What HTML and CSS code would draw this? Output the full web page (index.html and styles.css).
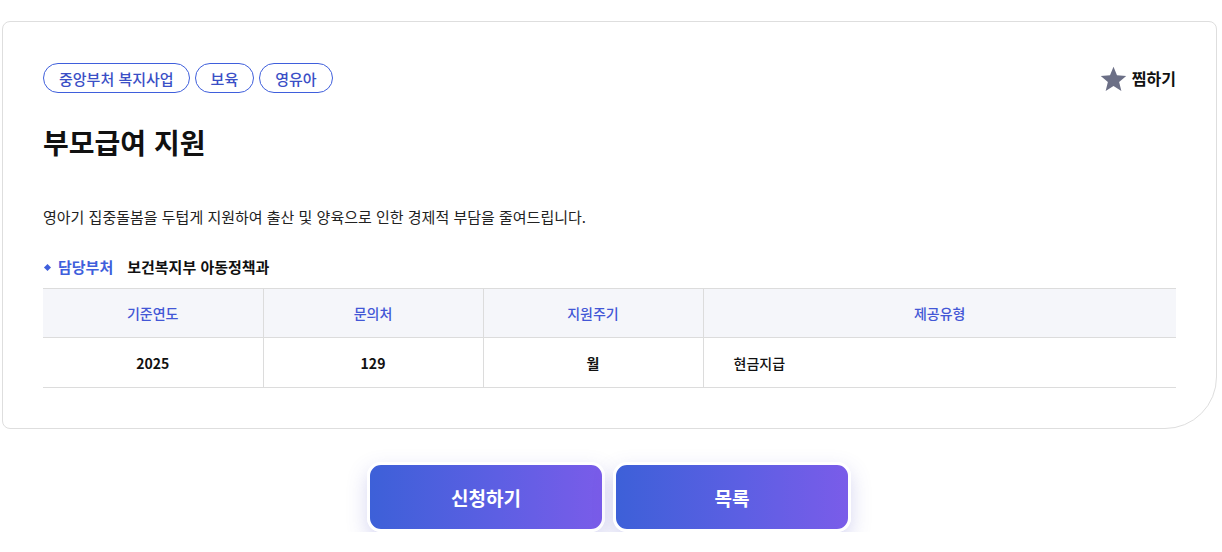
FILE: index.html
```html
<!DOCTYPE html>
<html lang="ko">
<head>
<meta charset="utf-8">
<link rel="stylesheet" href="styles.css">
</head>
<body>
<div class="page">
  <section class="card">
    <div class="top-row">
      <div class="tags">
        <span class="tag">중앙부처 복지사업</span>
        <span class="tag">보육</span>
        <span class="tag">영유아</span>
      </div>
      <button class="fav">
        <svg class="star" viewBox="0 0 24 24" width="27" height="27"><path d="M12 1.5l3.1 7.6 8.2.6-6.3 5.3 2 8-7-4.4-7 4.4 2-8L.7 9.7l8.2-.6z" fill="#6b6f86"/></svg>
        <span>찜하기</span>
      </button>
    </div>
    <h1 class="title">부모급여 지원</h1>
    <p class="desc">영아기 집중돌봄을 두텁게 지원하여 출산 및 양육으로 인한 경제적 부담을 줄여드립니다.</p>
    <div class="dept">
      <span class="dept-label"><span class="diamond"></span>담당부처</span>
      <span class="dept-value">보건복지부 아동정책과</span>
    </div>
    <table class="info">
      <thead>
        <tr><th class="c1">기준연도</th><th class="c2">문의처</th><th class="c3">지원주기</th><th class="c4">제공유형</th></tr>
      </thead>
      <tbody>
        <tr><td>2025</td><td>129</td><td>월</td><td class="left">현금지급</td></tr>
      </tbody>
    </table>
  </section>
  <div class="actions">
    <button class="btn">신청하기</button>
    <button class="btn">목록</button>
  </div>
</div>
</body>
</html>
```

FILE: styles.css
```css
* { box-sizing: border-box; }
html, body { margin: 0; padding: 0; background: #fff; }
body {
  font-family: "Noto Sans CJK KR", "Noto Sans", sans-serif;
  color: #111;
}
.page { padding-top: 21px; padding-left: 2px; width: 1217px; }
.card {
  border: 1px solid #dedede;
  border-radius: 8px 8px 52px 8px;
  padding: 41px 40px 40px 40px;
  background: #fff;
}
.top-row { display: flex; justify-content: space-between; align-items: center; }
.tags { display: flex; gap: 5px; }
.tag {
  display: inline-flex; align-items: center;
  height: 30px; padding: 0 15px;
  border: 1px solid #3f5fdc; border-radius: 15px;
  color: #3a4fc6; font-size: 15px; font-weight: 500;
  line-height: 1;
}
.fav {
  display: flex; align-items: center; gap: 5px;
  background: none; border: 0; padding: 0; margin-right: 0;
  font-family: inherit; font-size: 16px; font-weight: 700; color: #111;
}
.star { display: block; }
.title {
  margin: 30px 0 0; font-size: 28px; font-weight: 700; line-height: 39px;
  color: #111;
}
.desc { margin: 44px 0 0; font-size: 15px; line-height: 22px; color: #222; }
.dept { margin-top: 28px; display: flex; align-items: center; gap: 14px; font-size: 15px; line-height: 22px; font-weight: 700; }
.dept-label { color: #3f5fdc; display: flex; align-items: center; }
.diamond { width: 5px; height: 5px; background: #3f5fdc; transform: rotate(45deg); margin: 0 8px 0 2px; }
.dept-value { color: #111; }
.info {
  margin-top: 10px; width: 100%;
  border-collapse: collapse; table-layout: fixed;
  font-size: 14px;
}
.info th, .info td {
  border-top: 1px solid #dcdcdc; border-bottom: 1px solid #dcdcdc;
  border-left: 1px solid #dcdcdc; text-align: center;
}
.info th:first-child, .info td:first-child { border-left: 0; }
.info th {
  background: #f5f6fa; height: 49px; font-weight: 500; color: #4357d6;
}
.info td { height: 50px; font-weight: 700; color: #111; }
.info td.left { text-align: left; padding-left: 30px; font-weight: 500; }
.c1, .c2, .c3 { width: 220px; }
.actions {
  display: flex; justify-content: center; gap: 8px;
  margin-top: 33px; padding-right: 1px;
}
.btn {
  width: 238px; height: 70px;
  border: 3px solid #fff; border-radius: 14px;
  background: linear-gradient(90deg, #3d60d8 0%, #5d5fe3 55%, #7a5ce9 100%);
  color: #fff; font-family: inherit; font-size: 19px; font-weight: 700;
  box-shadow: 0 8px 20px rgba(90, 90, 200, 0.25);
}
```
